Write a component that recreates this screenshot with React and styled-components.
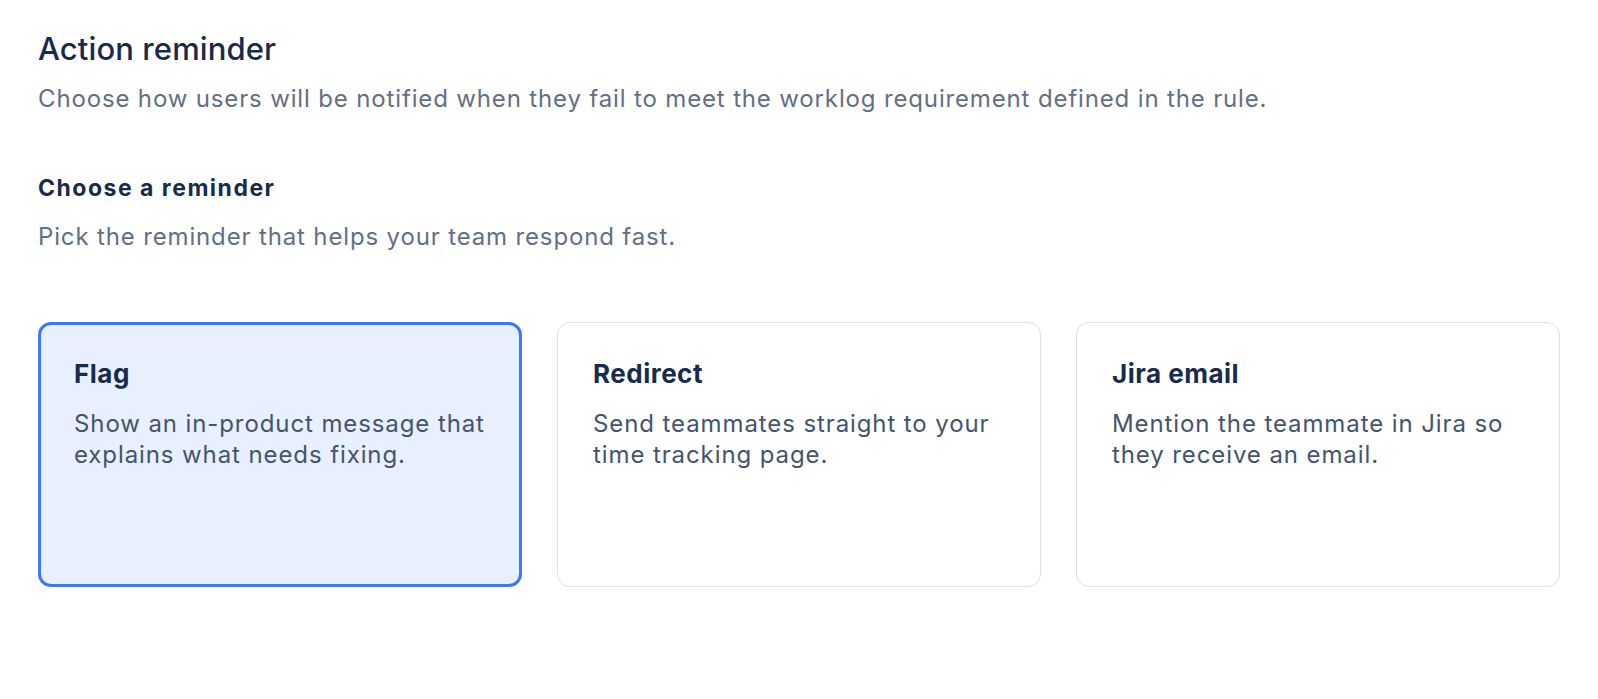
import { useState } from 'react';
import styled, { createGlobalStyle } from 'styled-components';

const GlobalStyle = createGlobalStyle`
  * { box-sizing: border-box; }
  body {
    margin: 0;
    background: #ffffff;
    font-family: Inter, 'Noto Sans', 'Liberation Sans', sans-serif;
    color: #172b4d;
  }
`;

const Page = styled.main`
  padding: 31px 38px 40px;
`;

const Title = styled.h1`
  margin: 0;
  font-size: 31px;
  line-height: 36px;
  font-weight: 500;
  letter-spacing: 0.1px;
  color: #172b4d;
`;

const Lead = styled.p`
  margin: 17px 0 0;
  font-size: 24px;
  line-height: 30px;
  letter-spacing: 0.85px;
  color: #626f86;
`;

const SectionTitle = styled.h2`
  margin: 59px 0 0;
  font-size: 23px;
  line-height: 30px;
  font-weight: 700;
  letter-spacing: 1.5px;
  color: #172b4d;
`;

const Hint = styled(Lead)`
  margin-top: 19px;
`;

const Options = styled.div`
  margin-top: 70px;
  display: grid;
  grid-template-columns: repeat(3, 1fr);
  gap: 35px;
`;

/* selected card has a thicker border, padding shrinks so the text stays put */
const Option = styled.button`
  height: 265px;
  display: flex;
  flex-direction: column;
  align-items: flex-start;
  gap: 18px;
  padding: ${({ $selected }) => ($selected ? '33px 28px 33px 33px' : '35px 30px 35px 35px')};
  text-align: left;
  font: inherit;
  cursor: pointer;
  border-radius: 13px;
  border: ${({ $selected }) => ($selected ? '3px solid #3d79f5' : '1px solid #dcdfe4')};
  background: ${({ $selected }) => ($selected ? '#e8effd' : '#ffffff')};
`;

const OptionTitle = styled.span`
  font-size: 26px;
  line-height: 32px;
  font-weight: 700;
  letter-spacing: 0.5px;
  color: #172b4d;
`;

const OptionText = styled.span`
  font-size: 24px;
  line-height: 31px;
  letter-spacing: 0.9px;
  color: #44546f;
`;

const reminders = [
  { id: 'flag', title: 'Flag', text: 'Show an in-product message that explains what needs fixing.' },
  { id: 'redirect', title: 'Redirect', text: 'Send teammates straight to your time tracking page.' },
  { id: 'email', title: 'Jira email', text: 'Mention the teammate in Jira so they receive an email.' },
];

export default function App() {
  const [selected, setSelected] = useState('flag');

  return (
    <>
      <GlobalStyle />
      <Page>
        <Title>Action reminder</Title>
        <Lead>Choose how users will be notified when they fail to meet the worklog requirement defined in the rule.</Lead>
        <SectionTitle>Choose a reminder</SectionTitle>
        <Hint>Pick the reminder that helps your team respond fast.</Hint>
        <Options>
          {reminders.map((r) => (
            <Option key={r.id} $selected={selected === r.id} onClick={() => setSelected(r.id)}>
              <OptionTitle>{r.title}</OptionTitle>
              <OptionText>{r.text}</OptionText>
            </Option>
          ))}
        </Options>
      </Page>
    </>
  );
}
